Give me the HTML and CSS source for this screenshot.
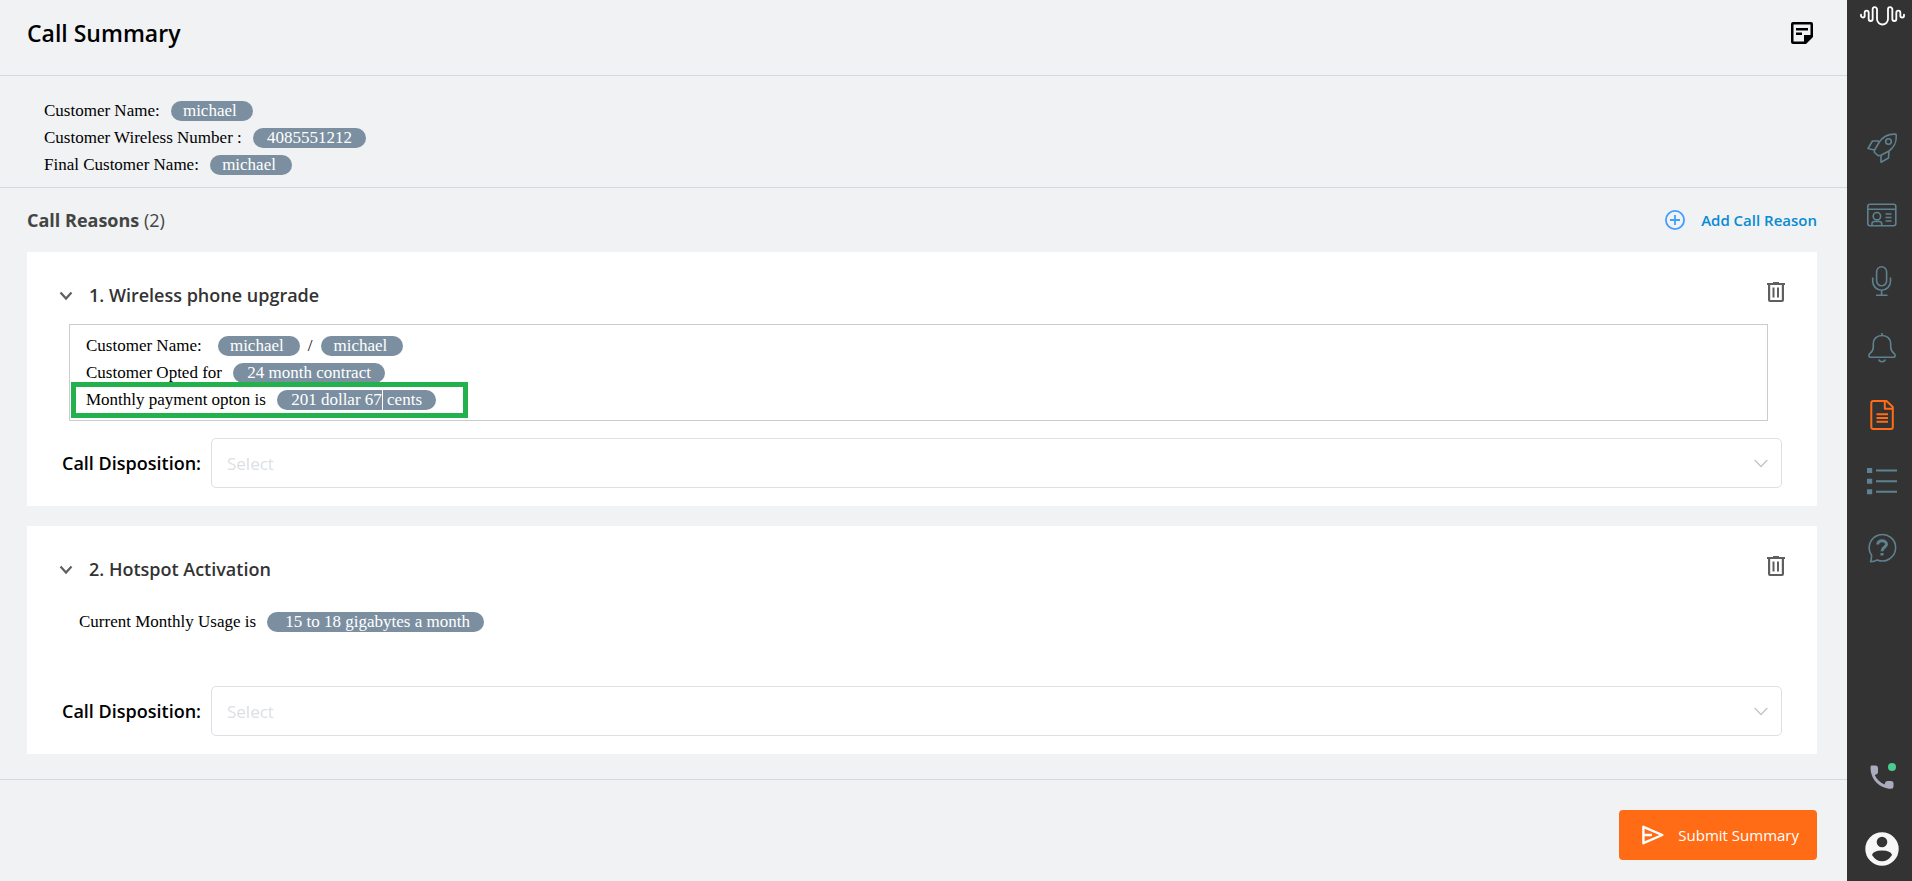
FILE: index.html
```html
<!DOCTYPE html>
<html lang="en">
<head>
    <meta charset="UTF-8">
    <meta name="viewport" content="width=device-width, initial-scale=1.0">
    <title>Call Summary</title>
    <link rel="stylesheet" href="styles.css">
</head>
<body>
<main class="main">
    <header class="header">
        <h1>Call Summary</h1>
        <button type="button" class="icon-btn" aria-label="Notes">
            <svg width="22" height="22" viewBox="0 0 22 22"><path fill="#000" fill-rule="evenodd" d="M2 0h18a2 2 0 0 1 2 2v13l-7 7H2a2 2 0 0 1-2-2V2a2 2 0 0 1 2-2zM2.500 2.500v17H13V13h6.500V2.500zM5 6h12v2.500H5zM5 10.500h6V13H5z"/></svg>
        </button>
    </header>

    <section class="customer">
        <p>Customer Name: <span class="pill short">michael</span></p>
        <p>Customer Wireless Number : <span class="pill">4085551212</span></p>
        <p>Final Customer Name: <span class="pill short">michael</span></p>
    </section>

    <section class="reasons">
        <div class="reasons-top">
            <h2>Call Reasons <span>(2)</span></h2>
            <button type="button" class="btn-add">
                <svg width="20" height="20" viewBox="0 0 20 20" fill="none" stroke="#409eff" stroke-width="1.800"><circle cx="10" cy="10" r="9.100"/><path d="M10 5v10M5 10h10"/></svg>
                Add Call Reason
            </button>
        </div>

        <article class="card">
            <div class="card-top">
                <button type="button" class="icon-btn" aria-label="Collapse">
                    <svg width="14" height="10" viewBox="0 0 14 10" fill="none" stroke="#5d6166" stroke-width="2.200"><path d="M1.500 1.500L7 7.500l5.500-6"/></svg>
                </button>
                <h3>1. Wireless phone upgrade</h3>
                <button type="button" class="icon-btn btn-trash" aria-label="Delete">
                    <svg width="18" height="20" viewBox="0 0 18 20"><path fill="#5f5f5f" fill-rule="evenodd" d="M6 0h6v1h6v2h-1v15a2 2 0 0 1-2 2H3a2 2 0 0 1-2-2V3H0V1h6zM3.200 3v15h11.600V3zM5.500 5.500h2v10h-2zM10 5.500h2v10h-2z"/></svg>
                </button>
            </div>
            <div class="editor" contenteditable="true" role="textbox" aria-label="Wireless phone upgrade notes">
                <p>Customer Name: <span class="pill short first">michael</span><span class="slash">/</span><span class="pill short">michael</span></p>
                <p>Customer Opted for <span class="pill">24 month contract</span></p>
                <p><span class="mark">Monthly payment opton is <span class="pill">201 dollar 67<i class="caret"></i> cents</span></span></p>
            </div>
            <div class="disposition">
                <label for="disposition1">Call Disposition:</label>
                <div class="select">
                    <select id="disposition1"><option>Select</option></select>
                    <svg width="14" height="9" viewBox="0 0 14 9" fill="none" stroke="#c0c4cc" stroke-width="1.300"><path d="M.7 1L7 7.500 13.300 1"/></svg>
                </div>
            </div>
        </article>

        <article class="card">
            <div class="card-top">
                <button type="button" class="icon-btn" aria-label="Collapse">
                    <svg width="14" height="10" viewBox="0 0 14 10" fill="none" stroke="#5d6166" stroke-width="2.200"><path d="M1.500 1.500L7 7.500l5.500-6"/></svg>
                </button>
                <h3>2. Hotspot Activation</h3>
                <button type="button" class="icon-btn btn-trash" aria-label="Delete">
                    <svg width="18" height="20" viewBox="0 0 18 20"><path fill="#5f5f5f" fill-rule="evenodd" d="M6 0h6v1h6v2h-1v15a2 2 0 0 1-2 2H3a2 2 0 0 1-2-2V3H0V1h6zM3.200 3v15h11.600V3zM5.500 5.500h2v10h-2zM10 5.500h2v10h-2z"/></svg>
                </button>
            </div>
            <div class="note">
                <p>Current Monthly Usage is <span class="pill wide">15 to 18 gigabytes a month</span></p>
            </div>
            <div class="disposition">
                <label for="disposition2">Call Disposition:</label>
                <div class="select">
                    <select id="disposition2"><option>Select</option></select>
                    <svg width="14" height="9" viewBox="0 0 14 9" fill="none" stroke="#c0c4cc" stroke-width="1.300"><path d="M.7 1L7 7.500 13.300 1"/></svg>
                </div>
            </div>
        </article>
    </section>

    <footer class="footer">
        <button type="submit" class="btn-submit">
            <svg width="22" height="20" viewBox="0 0 22 20" fill="none" stroke="#fff" stroke-width="2.400" stroke-linejoin="round"><path d="M1.400 1.800v16.400L20.300 10zM1.400 10H10"/></svg>
            Submit Summary
        </button>
    </footer>
</main>

<aside class="rail">
    <a href="#" class="logo" aria-label="Home">
        <svg width="45" height="20" viewBox="0 0 135 60" fill="none" stroke="#fff" stroke-width="5.500" stroke-linecap="round"><path d="M3 26v3a5.500 5.500 0 0 0 11 0V20a6 6 0 0 1 12 0V39a6 6 0 0 0 12 0V10a6.500 6.500 0 0 1 13 0V39a16.500 16.500 0 0 0 33 0V10a6.500 6.500 0 0 1 13 0V39a6 6 0 0 0 12 0V20a6 6 0 0 1 12 0V29a5.500 5.500 0 0 0 11 0V26"/></svg>
    </a>
    <nav class="rail-nav">
        <a href="#" aria-label="Launch">
            <svg width="30" height="30" viewBox="0 0 30 30"><path d="M29 1.200C20 .5 15.500 4 12 9.500L7.300 17.500 7.500 19.500 11.500 22.800 14 22.300 22 18C28 13.500 30 9 29 1.200zM12 8H5.500L1 15.500 7.300 17M14 22.300V29.200L21.500 25 22 18"/><circle cx="21.500" cy="8.500" r="2.800"/></svg>
        </a>
        <a href="#" aria-label="Contact">
            <svg width="30" height="30" viewBox="0 0 30 30"><rect x=".8" y="4.300" width="28" height="21.500" rx="2.200"/><path d="M1 9.300h28M18.500 14h6M18.500 17.500h6M18.500 21h6M5 25.500v-1.800Q5 21.500 7.500 21.500H12Q14.700 21.500 14.700 23.700V25.500"/><circle cx="9.900" cy="16.200" r="3.700"/></svg>
        </a>
        <a href="#" aria-label="Microphone">
            <svg width="30" height="30" viewBox="0 0 30 30"><rect x="9.600" y=".8" width="10" height="19" rx="5"/><path d="M5.700 11.500v3.800a8.900 8.900 0 0 0 17.800 0V11.500M14.600 24.200V29M9 29.200h11.500"/></svg>
        </a>
        <a href="#" aria-label="Notifications">
            <svg width="30" height="30" viewBox="0 0 30 30"><path d="M15 0v2.500M15 2.500C9.500 2.500 6.300 6 6.300 10.500V14C6.300 18 5 18.800 2.600 20.800 1.300 22 1.800 24.200 3.500 24.200H26.500C28.200 24.200 28.700 22 27.400 20.800 25 18.800 23.700 18 23.700 14V10.500C23.700 6 20.500 2.500 15 2.500zM11.800 26.500a3.300 2.900 0 0 0 6.400 0"/></svg>
        </a>
        <a href="#" class="active" aria-label="Summary">
            <svg width="30" height="30" viewBox="0 0 30 30"><path d="M6.300 1H19.500L25.800 7V27Q25.800 29 23.800 29H6.300Q4.300 29 4.300 27V3Q4.300 1 6.300 1zM17.800 1V8.700H25.500M9.500 14.300H21M9.500 18H21M9.500 21.800H21"/></svg>
        </a>
        <a href="#" aria-label="List">
            <svg width="30" height="30" viewBox="0 0 30 30"><path stroke-width="5" d="M0 4.500h5.200M0 15.200h5.200M0 25.800h5.200"/><path stroke-width="2" d="M9 4.500h21M9 15.200h21M9 25.800h21"/></svg>
        </a>
        <a href="#" aria-label="Help">
            <svg width="30" height="30" viewBox="0 0 30 30"><path d="M4.600 22.300A13.200 13.200 0 1 1 10.300 26.900Q7.500 28.800 3.500 28.800 4.600 26.500 4.600 22.300z"/><path class="bold" d="M10.700 11.500C10.700 6.500 19.500 6.500 19.500 11.300 19.500 14.500 15 14 15 18.200M15 20v2.600"/></svg>
        </a>
    </nav>
    <div class="rail-user">
        <a href="#" class="phone" aria-label="Phone">
            <svg width="24" height="24" viewBox="0 0 24 24"><path fill="#a9acbf" d="M1.500.5h4.300Q8 .5 8 3v4.300Q8 9 6 9.500L4.800 10C6.500 14 10 17.500 14.500 19.500L15 18Q15.500 16 17.500 16H21Q23.500 16 23.500 18.500V21.500Q23.500 23.800 21 23.800C10 23.500.5 15 .5 2.500Q.5.5 1.500.5z"/></svg>
            <span class="status"></span>
        </a>
        <a href="#" class="avatar" aria-label="Account">
            <svg width="34" height="34" viewBox="0 0 34 34"><circle cx="17" cy="17" r="16.700" fill="#f7f7f8"/><circle cx="17" cy="10" r="5.300" fill="#333"/><path fill="#333" d="M7 23Q8 18.500 17 18.500T27 23Q23 29.300 17 29.300T7 23z"/></svg>
        </a>
    </div>
</aside>
</body>
</html>
```

FILE: styles.css
```css
* {box-sizing: border-box;}
body {display: flex; margin: 0; min-height: 100vh; background-color: #f0f2f4; font-family: 'Open Sans', 'Noto Sans', sans-serif; color: #000;}
h1, h2, h3, p {margin: 0;}
button {padding: 0; border: 0; background: transparent; font-family: inherit; cursor: pointer;}
svg {display: block; flex: none;}

.main {display: flex; flex: 1; flex-direction: column; min-width: 0;}
.header {display: flex; align-items: center; justify-content: space-between; padding: 15px 34px 24px 27px; border-bottom: 1px solid #d5d8e3;}
.header h1 {font-size: 23px; line-height: 36px; font-weight: 600;}

/* customer details */
.customer, .editor, .note {font-family: 'Liberation Serif', 'Times New Roman', serif; font-size: 17px; line-height: 27px;}
.customer {padding: 21px 44px 9px; border-bottom: 1px solid #d5d8e3;}
.pill {display: inline-block; margin-left: 7px; padding: 0 14px; border-radius: 10px; background-color: #7b8fa0; color: #fff; line-height: 20px; white-space: nowrap;}
.pill.short {padding: 0 16px 0 12px;}
.pill.wide {padding-left: 18px;}
.pill.first {margin-left: 12px;}

/* call reasons */
.reasons {display: flex; flex: 1; flex-direction: column; gap: 20px; padding: 20px 30px 25px 27px;}
.reasons-top {display: flex; align-items: center; justify-content: space-between; line-height: 24px;}
.reasons-top h2 {font-size: 18px; font-weight: 700; color: #444;}
.reasons-top h2 span {font-weight: 400;}
.btn-add {display: flex; align-items: center; gap: 16px; font-size: 15px; font-weight: 600; color: #088bd2;}

.card {padding: 30px 35px 18px; background-color: #fff;}
.card-top {display: flex; align-items: center; margin: 0 -3px; line-height: 26px;}
.card-top h3 {margin: 0 0 2px 16px; font-size: 18px; font-weight: 600; color: #333;}
.btn-trash {margin: 0 0 8px auto;}
.editor {margin: 14px 14px 17px 7px; padding: 7px 16px; border: 1px solid #ccc;}
.editor .slash {margin: 0 2px 0 8px;}
.mark {display: inline-block; position: relative;}
.mark::after {content: ''; position: absolute; inset: -4px -32px -5px -15px; border: 5px solid #22b14c; pointer-events: none;}
.caret {display: inline-block; width: 1px; height: 20px; background-color: #fff; vertical-align: top;}
.note {padding: 24px 17px 51px;}

.disposition {display: flex; align-items: center; gap: 10px;}
.disposition label {font-size: 18px; font-weight: 600;}
.select {display: grid; flex: 1; align-items: center;}
.select select {grid-area: 1 / 1; width: 100%; height: 50px; padding: 0 15px; border: 1px solid #dcdfe6; border-radius: 5px; background: #fff; appearance: none; font-family: inherit; font-size: 17px; color: #dcdfe6;}
.select svg {grid-area: 1 / 1; justify-self: end; margin-right: 14px; pointer-events: none;}

.footer {display: flex; justify-content: flex-end; padding: 30px 30px 21px; border-top: 1px solid #d5d8e3;}
.btn-submit {display: flex; align-items: center; gap: 14px; height: 50px; padding: 0 18px 0 23px; border-radius: 4px; background-color: #ff6c15; font-size: 15px; color: #fff;}

/* right icon rail */
.rail {display: flex; flex: none; flex-direction: column; align-items: center; width: 65px; padding: 6px 0 15px 5px; background-color: #333;}
.rail-nav {display: flex; flex-direction: column; justify-content: space-between; height: 430px; margin-top: 107px;}
.rail-nav svg {fill: none; stroke: #5f8291; stroke-width: 1.600px; stroke-linejoin: round;}
.rail-nav .active svg {stroke: #ff6c15; stroke-width: 2px;}
.rail-nav .bold {stroke-width: 3px;}
.rail-user {display: flex; flex-direction: column; align-items: center; gap: 43px; margin-top: auto;}
.phone {position: relative;}
.status {position: absolute; top: -2px; right: -2px; width: 8px; height: 8px; border-radius: 50%; background-color: #49cc90;}
```
